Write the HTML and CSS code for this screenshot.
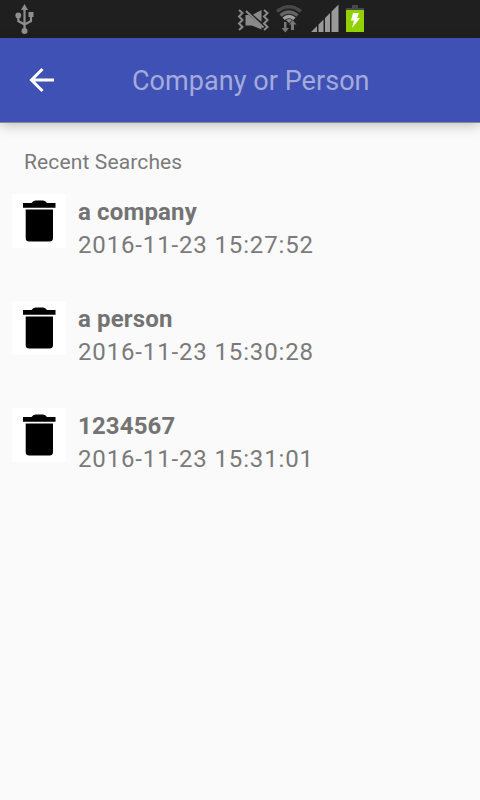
FILE: index.html
```html
<!DOCTYPE html>
<html lang="en">
<head>
    <meta charset="UTF-8">
    <meta name="viewport" content="width=device-width, initial-scale=1.0">
    <title>Company or Person</title>
    <link rel="stylesheet" href="styles.css">
</head>
<body>
    <svg class="defs" width="0" height="0">
        <symbol id="trash" viewBox="0 0 54 54">
            <path d="M11 9h8.500q1.500-2.500 4-2.500h7.500q2.500 0 4 2.500h8.500v4.700H11z"/>
            <path d="M13.700 15.500h27.300v28.500q0 3.500-3.500 3.500H17.200q-3.500 0-3.500-3.500z"/>
        </symbol>
    </svg>

    <!-- Status bar -->
    <div class="status-bar">
        <svg class="usb" width="20" height="38" viewBox="0 0 20 38">
            <g fill="none" stroke="#8e8e8e" stroke-width="2.200">
                <path d="M9.500 8v22M3.300 15v6l6.200 3.500M16 14v7l-6.500 3.500"/>
            </g>
            <path fill="#8e8e8e" d="M9.500 4l3.500 6H6z"/>
            <circle fill="#8e8e8e" cx="3.300" cy="15.500" r="2.900"/>
            <circle fill="#8e8e8e" cx="9.500" cy="31" r="3"/>
            <path fill="#8e8e8e" d="M13.500 12h5v5h-5z"/>
        </svg>
        <div class="status-icons">
            <svg width="32" height="38" viewBox="0 0 32 38">
                <g fill="none" stroke="#8a8a8a" stroke-width="2">
                    <path d="M2 10l3.500 3L2 16.500 5.500 20 2 23.500 5.500 27 2 30"/>
                    <path d="M27 10l3.500 3-3.500 3.500 3.500 3.500-3.500 3.500 3.500 3.500-3.500 3"/>
                </g>
                <path fill="#8a8a8a" d="M8.500 15h3L24.500 26v3.500L15 25.500H8.500z"/>
                <path fill="#8a8a8a" d="M16 14.500L24.500 10v12z"/>
                <path stroke="#8a8a8a" stroke-width="2" d="M9 11L26.500 27.500"/>
            </svg>
            <svg width="28" height="38" viewBox="0 0 28 38">
                <g fill="none" stroke-width="3.400">
                    <path stroke="#484848" d="M1 11.500q12-9.500 24 0"/>
                    <path stroke="#656565" d="M4.500 15.500q8.500-7 17 0"/>
                    <path stroke="#a0a0a0" d="M7.500 18.800q5.500-4.500 11 0"/>
                </g>
                <path fill="#8a8a8a" d="M10 20q3-2 6 0l-3 3z"/>
                <path fill="#777" d="M8 22h2.500v6H13l-3.700 4.500L5.500 28H8zM16.500 20l-3.500 4.500h2V30h3v-5.500h2.500z"/>
            </svg>
            <svg width="28" height="38" viewBox="0 0 28 38">
                <path fill="#999" d="M0 32L6 26v6zM7.500 32v-7.500L12.500 19.500V32zM14 32V18l5-5v19zM20.500 32V11.500l7-7V32z"/>
            </svg>
            <svg width="18" height="38" viewBox="0 0 18 38">
                <path fill="#484848" d="M6 5h6v3h6v2H0V8h6z"/>
                <path fill="#91d100" d="M0 10h18v22H0z"/>
                <path fill="#fff" d="M7 13h6l-2 5h3L6 28l2-7.500H5z"/>
            </svg>
        </div>
    </div>

    <!-- Toolbar -->
    <div class="toolbar">
        <svg class="back" width="26" height="26" viewBox="0 0 26 26">
            <path d="M25 13H3M13.500 2L2.500 13l11 11"/>
        </svg>
        <span class="title">Company or Person</span>
    </div>

    <div class="content">
        <div class="heading">Recent Searches</div>

        <div class="item">
            <svg class="delete"><use href="#trash"/></svg>
            <div class="text">
                <div class="name">a company</div>
                <div class="date">2016-11-23 15:27:52</div>
            </div>
        </div>

        <div class="item">
            <svg class="delete"><use href="#trash"/></svg>
            <div class="text">
                <div class="name">a person</div>
                <div class="date">2016-11-23 15:30:28</div>
            </div>
        </div>

        <div class="item">
            <svg class="delete"><use href="#trash"/></svg>
            <div class="text">
                <div class="name">1234567</div>
                <div class="date">2016-11-23 15:31:01</div>
            </div>
        </div>
    </div>
</body>
</html>
```

FILE: styles.css
```css
body {
    font-family: Roboto, sans-serif;
    margin: 0;
    height: 800px;
    overflow: hidden;
    background-color: #fafafa;
    color: #737373;
}

svg {
    display: block;
    flex: none;
}

.defs {
    position: absolute;
}

.status-bar {
    display: flex;
    justify-content: space-between;
    height: 38px;
    padding-left: 15px;
    padding-right: 116px;
    background-color: #1f1f1f;
}

.status-icons {
    display: flex;
    gap: 7px;
}

.toolbar {
    display: flex;
    align-items: center;
    height: 84px;
    padding-left: 29px;
    background-color: #3f51b5;
    box-shadow: 0 1px 0 #8a8a8a, 0 3px 12px rgba(0, 0, 0, 0.25);
}

.back {
    fill: none;
    stroke: #fff;
    stroke-width: 3;
}

.title {
    margin-left: 77px;
    padding-top: 2px;
    font-size: 27px;
    line-height: 32px;
    letter-spacing: 0.05px;
    color: #a3abdb;
}

.heading {
    margin: 27px 0 19px 24px;
    font-size: 21px;
    line-height: 26px;
    letter-spacing: 0.13px;
    color: #7a7a7a;
}

.item {
    display: flex;
    height: 107px;
    padding-left: 12px;
}

.delete {
    width: 54px;
    height: 54px;
    background-color: #fff;
    fill: #000;
}

.text {
    margin-left: 12px;
    padding-top: 2px;
}

.name {
    font-size: 24px;
    font-weight: bold;
    line-height: 33px;
    letter-spacing: 0.15px;
}

.date {
    font-size: 24px;
    line-height: 33px;
    letter-spacing: 0.85px;
    color: #7a7a7a;
}
```
